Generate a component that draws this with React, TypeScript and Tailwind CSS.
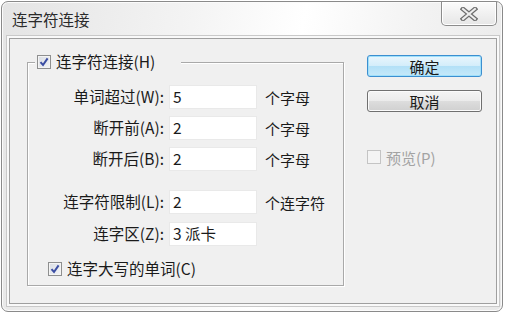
import React from 'react';

const font = "font-['Noto_Sans_CJK_SC','Microsoft_YaHei',sans-serif]";

function Check({ checked, disabled }: { checked?: boolean; disabled?: boolean }) {
  return (
    <span
      className={`flex h-[14px] w-[14px] shrink-0 items-center justify-center border ${
        disabled
          ? 'border-[#c4c4c4] bg-[#f4f4f4]'
          : 'border-[#8e8f8f] bg-[linear-gradient(135deg,#d9dde4,#f3f4f6)] shadow-[inset_0_0_0_1px_#f4f4f4]'
      }`}
    >
      {checked && (
        <svg width="10" height="10" viewBox="0 0 10 10">
          <path d="M1.5 5.2 L4 8 L8.6 1.4" fill="none" stroke="#3b4ea3" strokeWidth="2" />
        </svg>
      )}
    </span>
  );
}

function Row({ label, value, unit }: { label: string; value: string; unit?: string }) {
  return (
    <div className="flex h-6 items-center">
      <span className="w-[136px] text-right text-[15.5px]">{label}</span>
      <div className="ml-[5px] flex h-6 w-[88px] items-center border border-[#e9e9e9] bg-white pl-[3px] text-[15.5px]">{value}</div>
      {unit && <span className="ml-[8px] text-[15px]">{unit}</span>}
    </div>
  );
}

export default function App() {
  return (
    <div className={`h-[315px] w-[508px] overflow-hidden bg-white text-[15px] leading-none text-[#1a1a1a] ${font}`}>
      <div className="ml-px mt-px h-[311px] w-[502px] rounded-[7px] border border-[#8a8a8a] bg-[linear-gradient(100deg,#e4e4e4_0%,#f4f4f4_35%,#ffffff_55%,#f3f3f3_75%,#e8e8e8_100%)] shadow-[inset_0_0_0_1px_#fbfbfb]">
        {/* Title bar */}
        <div className="flex h-[36px] items-start justify-between">
          <div className="pl-[10px] pt-[10px] text-[15.5px] text-[#2a2a2a]">连字符连接</div>
          <div className="mr-[5px] flex h-[24px] w-[56px] items-center justify-center rounded-b-[5px] border border-t-0 border-[#8c8c8c] bg-[linear-gradient(#fbfbfb,#e6e6e6)] shadow-[inset_0_0_0_1px_#ffffff]">
            <svg width="18" height="14" viewBox="0 0 18 14">
              <path d="M3 2 L15 12 M15 2 L3 12" stroke="#6d6d6d" strokeWidth="4.5" strokeLinecap="square" />
              <path d="M3 2 L15 12 M15 2 L3 12" stroke="#eeeeee" strokeWidth="2" strokeLinecap="square" />
            </svg>
          </div>
        </div>

        {/* Client area */}
        <div className="ml-[7px] flex h-[266px] w-[488px] items-start border border-[#9f9f9f] bg-[#f0f0f0] pl-[17px] pt-[16px] shadow-[0_0_0_2px_#f9f9f9,0_0_0_3px_#c9c9c9]">
          {/* Group box */}
          <div className="relative mt-[7px] h-[224px] w-[317px] border border-[#a9a9a9] pt-[22px] shadow-[inset_1px_1px_0_#ffffff,1px_1px_0_#ffffff]">
            <div className="absolute left-[7px] top-[-8px] flex h-[14px] items-center gap-[5px] bg-[#f0f0f0] pl-[2px] pr-[26px]">
              <Check checked />
              <span className="text-[15.5px]">连字符连接(H)</span>
            </div>

            <div className="flex flex-col gap-[7px]">
              <Row label="单词超过(W):" value="5" unit="个字母" />
              <Row label="断开前(A):" value="2" unit="个字母" />
              <Row label="断开后(B):" value="2" unit="个字母" />
            </div>

            <div className="mt-[19px] flex flex-col gap-[8px]">
              <Row label="连字符限制(L):" value="2" unit="个连字符" />
              <Row label="连字区(Z):" value="3 派卡" />
            </div>

            <div className="mt-[16px] flex h-[14px] items-center gap-[5px] pl-[20px]">
              <Check checked />
              <span className="text-[15.5px]">连字大写的单词(C)</span>
            </div>
          </div>

          {/* Buttons */}
          <div className="ml-[23px] flex w-[115px] flex-col">
            <button className="flex h-[22px] w-[115px] items-center justify-center rounded-[3px] border border-[#3c8fd0] bg-[linear-gradient(#e9f6fd,#d3edfa_50%,#b2e0f7_51%,#c6e9f9)] text-[15px] text-[#1a1a1a] shadow-[inset_0_0_0_1px_#9fe0fb]">
              确定
            </button>
            <button className="mt-[13px] flex h-[22px] w-[115px] items-center justify-center rounded-[3px] border border-[#707070] bg-[linear-gradient(#f4f4f4,#ebebeb_50%,#dddddd_51%,#d0d0d0)] text-[15px] text-[#1a1a1a] shadow-[inset_0_0_0_1px_#fbfbfb]">
              取消
            </button>
            <div className="mt-[38px] flex h-[14px] items-center gap-[5px] text-[#a3a3a3]">
              <Check disabled />
              <span>预览(P)</span>
            </div>
          </div>
        </div>
      </div>
    </div>
  );
}
